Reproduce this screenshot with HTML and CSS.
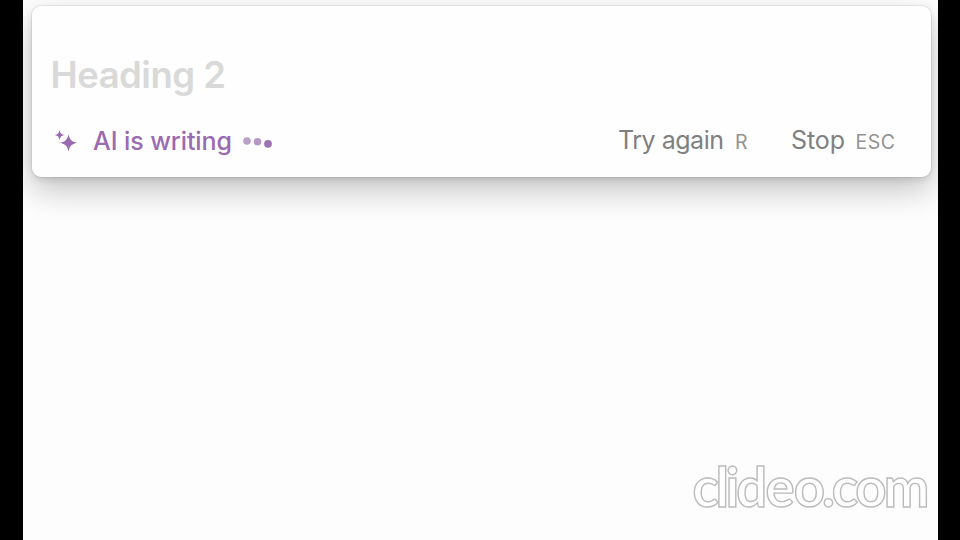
FILE: index.html
```html
<!DOCTYPE html>
<html lang="en">
<head>
<meta charset="utf-8">
<title>AI writing block</title>
<link rel="stylesheet" href="styles.css">
</head>
<body>
<main class="stage">
  <section class="card">
    <h2 class="heading"><svg width="190" height="48"><text x="-0.5" y="35.3" textLength="175.5">Heading 2</text></svg></h2>
    <div class="toolbar">
      <svg class="sparkles" width="24" height="24" viewBox="0 0 24 24">
        <path d="M5.6 0C6.4 3.4 7.2 4.3 10.6 5.1C7.2 5.9 6.4 6.8 5.6 10.2C4.8 6.8 4 5.9.6 5.1C4 4.3 4.8 3.4 5.6 0Z"/>
        <path d="M14.5 4.2C15.9 9.8 17.2 11.3 23.2 12.8C17.2 14.3 15.9 15.8 14.5 21.4C13.1 15.8 11.8 14.3 5.8 12.8C11.8 11.3 13.1 9.8 14.5 4.2Z"/>
      </svg>
      <svg class="status" width="140" height="34"><text x="0" y="25" textLength="139">AI is writing</text></svg>
      <svg class="dots" width="30" height="14">
        <circle class="dot-soft" cx="4" cy="5" r="3.8"/>
        <circle class="dot-mid" cx="14.5" cy="5.7" r="3.8"/>
        <circle class="dot-full" cx="25" cy="7.8" r="3.9"/>
      </svg>
      <div class="actions">
        <svg class="action" width="134" height="34"><text x="0" y="25" textLength="106">Try again</text><text class="key" x="117" y="25">R</text></svg>
        <svg class="action" width="108" height="34"><text x="0" y="25" textLength="54">Stop</text><text class="key" x="64.5" y="25" textLength="39.5">ESC</text></svg>
      </div>
    </div>
  </section>
  <svg class="watermark" width="240" height="56"><text x="1.4 24.6 34.4 45.2 74.6 102.8 130.9 140.7 164.3 192.8" y="44">clideo.com</text></svg>
</main>
</body>
</html>
```
FILE: styles.css
```css
* { box-sizing: border-box; }
body {
  margin: 0;
  background: #000;
  font-family: Inter, "Liberation Sans", sans-serif;
}
svg { display: block; flex: none; overflow: visible; }
.stage {
  display: flex;
  flex-direction: column;
  justify-content: space-between;
  width: 915px;
  height: 540px;
  margin-left: 22.5px;
  padding: 6px 6.5px 21px 9px;
  background: #fdfdfd;
  overflow: hidden;
}
.card {
  height: 171px;
  padding: 47px 32px 0 19px;
  border-radius: 9px;
  background: #fefefe;
  box-shadow: 0 0 0 1px rgba(0,0,0,.06), 0 3px 6px rgba(0,0,0,.1), 0 13px 32px rgba(0,0,0,.23);
}
.heading {
  margin: 0;
  font-size: 36.5px;
  font-weight: 600;
  fill: #d9d9d9;
}
.toolbar { display: flex; align-items: center; height: 70px; padding-left: 3.5px; margin-top: 6px; }
.sparkles { fill: #9b69b0; }
.status { margin-left: 15px; font-size: 25px; font-weight: 500; fill: #9a6bb1; }
.dots { margin: 2px 0 0 9.5px; fill: #9d73b3; }
.dot-soft { fill: #b9a0c8; }
.dot-mid { fill: #b498c6; }
.actions { display: flex; gap: 39.5px; margin: -3px 0 0 auto; }
.action { font-size: 25px; fill: #808080; }
.key { font-size: 19.5px; fill: #929292; }
.watermark { align-self: flex-end; }
.watermark text {
  font-family: Lato, Inter, sans-serif;
  font-size: 54.5px;
  font-weight: 700;
  fill: #fff;
  stroke: #bbb;
  stroke-width: 1.4px;
}
```
